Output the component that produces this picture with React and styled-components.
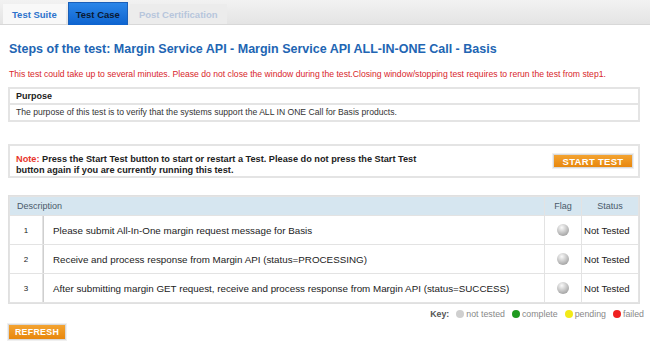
import React from "react";
import styled, { createGlobalStyle } from "styled-components";

const GlobalStyle = createGlobalStyle`
  body {
    margin: 0;
    background: #ffffff;
    font-family: "Liberation Sans", Arial, sans-serif;
  }
`;

const Page = styled.div`
  width: 650px;
  height: 343px;
  overflow: hidden;
  background: #fff;
`;

const TabBar = styled.div`
  display: flex;
  align-items: flex-end;
  gap: 2px;
  height: 24px;
  padding-left: 3px;
  background: linear-gradient(#f2f2f2, #e4e4e4);
  border-bottom: 1px solid #d8d8d8;
`;

const Tab = styled.div`
  height: ${(p) => (p.active ? 22 : 20)}px;
  display: flex;
  align-items: center;
  padding: 0 ${(p) => p.pad || 10}px;
  font-size: 9.5px;
  font-weight: bold;
  color: ${(p) => (p.active ? "#0a1a33" : p.muted ? "#b7c6dc" : "#2d73cc")};
  background: ${(p) =>
    p.active ? "linear-gradient(#2b86e8, #0d63cf)" : p.muted ? "#ececec" : "#f8f8f8"};
  border: ${(p) => (p.active ? "1px solid #1a5fb8" : "none")};
  border-bottom: none;
  margin-bottom: ${(p) => (p.active ? -1 : 0)}px;
`;

const Content = styled.div`
  padding: 0 10px 0 8px;
`;

const Title = styled.h1`
  margin: 17px 0 0 1px;
  font-size: 12.5px;
  line-height: 15px;
  font-weight: bold;
  color: #2165b3;
`;

const Warning = styled.p`
  margin: 12px 0 0 1px;
  font-size: 8.65px;
  line-height: 10px;
  color: #d8262c;
`;

const Box = styled.div`
  border: 2px solid #e4e4e4;
  margin-top: ${(p) => p.top || 0}px;
`;

const BoxHead = styled.div`
  padding: 0 6px;
  line-height: 14px;
  font-size: 9px;
  font-weight: bold;
  color: #222;
  border-bottom: 2px solid #e4e4e4;
`;

const BoxText = styled.div`
  padding: 0 6px;
  line-height: 15px;
  font-size: 8.6px;
  color: #333;
`;

const NoteBox = styled(Box)`
  display: flex;
  align-items: flex-start;
  justify-content: space-between;
  height: 22px;
  padding: 8px 5px 0 6px;
`;

const NoteText = styled.p`
  margin: 0;
  font-size: 9.2px;
  font-weight: bold;
  color: #222;
  line-height: 11px;
  width: 420px;
`;

const Red = styled.span`
  color: #e8352c;
`;

const OrangeButton = styled.button`
  font-family: "Liberation Sans", Arial, sans-serif;
  font-weight: bold;
  color: #fff;
  font-size: ${(p) => p.size || 9.5}px;
  letter-spacing: 0.3px;
  background: linear-gradient(#f3a331, #e8870d);
  border: 1px solid #d9d9d9;
  outline: 1px solid #f0f0f0;
  padding: 0;
  width: ${(p) => p.w}px;
  height: ${(p) => p.h}px;
  cursor: pointer;
`;

const Table = styled.table`
  width: 100%;
  margin-top: 17px;
  border-collapse: separate;
  border-spacing: 1px;
  border: 1px solid #e0e0e0;
  background: #e3e3e3;
  color: #222;
`;

const Th = styled.th`
  background: #d6e6f0;
  color: #4a5a6a;
  font-weight: normal;
  font-size: 9px;
  height: 18px;
  text-align: ${(p) => p.align || "center"};
  padding: 0 ${(p) => (p.align ? 7 : 0)}px;
  width: ${(p) => (p.w ? p.w + "px" : "auto")};
`;

const Td = styled.td`
  background: #fff;
  height: 28px;
  text-align: ${(p) => p.align || "center"};
  padding: 0 ${(p) => (p.align === "left" ? p.pad ?? 9 : 0)}px;
  font-size: ${(p) => (p.small ? 8 : 9.8)}px;
  white-space: nowrap;
  border-left: ${(p) => (p.divider ? "1px solid #cfcfcf" : "none")};
`;

const Flag = styled.span`
  display: inline-block;
  width: 12px;
  height: 12px;
  border-radius: 50%;
  vertical-align: middle;
  background: radial-gradient(circle at 40% 30%, #fafafa, #bdbdbd 55%, #8a8a8a);
`;

const Status = styled.span`
  font-size: 9.6px;
  color: #222;
`;

const KeyRow = styled.div`
  display: flex;
  justify-content: flex-end;
  align-items: center;
  gap: 5px;
  margin-top: 5px;
  margin-right: -6px;
  font-size: 8.8px;
  line-height: 10px;
  color: #888;
`;

const KeyLabel = styled.span`
  font-weight: bold;
  color: #555;
  margin-right: 2px;
`;

const KeyItem = styled.span`
  display: inline-flex;
  align-items: center;
  gap: 2px;
  margin-right: 2px;
`;

const Dot = styled.span`
  display: inline-block;
  width: 8px;
  height: 8px;
  border-radius: 50%;
  background: ${(p) => p.color};
`;

const RefreshWrap = styled.div`
  margin-top: 2px;
`;

const steps = [
  "Please submit All-In-One margin request message for Basis",
  "Receive and process response from Margin API (status=PROCESSING)",
  "After submitting margin GET request, receive and process response from Margin API (status=SUCCESS)",
];

const keys = [
  { label: "not tested", color: "#cfcfcf" },
  { label: "complete", color: "#1f9a1f" },
  { label: "pending", color: "#f2ea17" },
  { label: "failed", color: "#ef2020" },
];

export default function App() {
  return (
    <Page>
      <GlobalStyle />
      <TabBar>
        <Tab pad={9}>Test Suite</Tab>
        <Tab active pad={7}>Test Case</Tab>
        <Tab muted pad={9}>Post Certification</Tab>
      </TabBar>
      <Content>
        <Title>Steps of the test: Margin Service API - Margin Service API ALL-IN-ONE Call - Basis</Title>
        <Warning>
          This test could take up to several minutes. Please do not close the window during the
          test.Closing window/stopping test requires to rerun the test from step1.
        </Warning>
        <Box top={8}>
          <BoxHead>Purpose</BoxHead>
          <BoxText>The purpose of this test is to verify that the systems support the ALL IN ONE Call for Basis products.</BoxText>
        </Box>
        <NoteBox top={22}>
          <NoteText>
            <Red>Note: </Red>Press the Start Test button to start or restart a Test. Please do not
            press the Start Test button again if you are currently running this test.
          </NoteText>
          <OrangeButton w={80} h={14}>START TEST</OrangeButton>
        </NoteBox>
        <Table>
          <thead>
            <tr>
              <Th colSpan={2} align="left">Description</Th>
              <Th w={36}>Flag</Th>
              <Th w={56}>Status</Th>
            </tr>
          </thead>
          <tbody>
            {steps.map((s, i) => (
              <tr key={i}>
                <Td small style={{ width: 32 }}>{i + 1}</Td>
                <Td align="left" divider>{s}</Td>
                <Td><Flag /></Td>
                <Td align="left" pad={2}><Status>Not Tested</Status></Td>
              </tr>
            ))}
          </tbody>
        </Table>
        <KeyRow>
          <KeyLabel>Key:</KeyLabel>
          {keys.map((k) => (
            <KeyItem key={k.label}>
              <Dot color={k.color} />
              {k.label}
            </KeyItem>
          ))}
        </KeyRow>
        <RefreshWrap>
          <OrangeButton w={58} h={16} size={8.8}>REFRESH</OrangeButton>
        </RefreshWrap>
      </Content>
    </Page>
  );
}
